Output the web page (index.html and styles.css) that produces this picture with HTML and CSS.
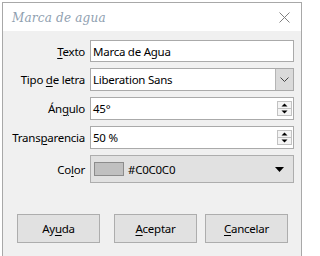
FILE: index.html
```html
<!DOCTYPE html>
<html>
<head>
<meta charset="utf-8">
<link rel="stylesheet" href="styles.css">
</head>
<body>
<div class="window">
  <div class="titlebar">
    <span class="title">Marca de agua</span>
    <svg class="close" width="11" height="11" viewBox="0 0 11 11"><path d="M0.5 0.5L10.5 10.5M10.5 0.5L0.5 10.5" stroke="#808080" stroke-width="1" fill="none"/></svg>
  </div>
  <div class="content">
    <div class="form">
      <span class="lbl"><u>T</u>exto</span>
      <div class="field"><span class="val">Marca de Agua</span></div>

      <span class="lbl">Tipo <u>d</u>e letra</span>
      <div class="field"><span class="val">Liberation Sans</span><span class="ddbtn"><svg width="9" height="5" viewBox="0 0 9 5"><path d="M0.5 0.5L4.5 4.5L8.5 0.5" stroke="#444" stroke-width="1" fill="none"/></svg></span></div>

      <span class="lbl">Án<u>g</u>ulo</span>
      <div class="field"><span class="val">45°</span><span class="spin"><span class="sb"><svg width="7" height="4" viewBox="0 0 7 4"><path d="M3.5 0.5L6.5 3.5H0.5Z" fill="#000"/></svg></span><span class="sb"><svg width="7" height="4" viewBox="0 0 7 4"><path d="M0.5 0.5H6.5L3.5 3.5Z" fill="#000"/></svg></span></span></div>

      <span class="lbl">Trans<u>p</u>arencia</span>
      <div class="field"><span class="val">50 %</span><span class="spin"><span class="sb"><svg width="7" height="4" viewBox="0 0 7 4"><path d="M3.5 0.5L6.5 3.5H0.5Z" fill="#000"/></svg></span><span class="sb"><svg width="7" height="4" viewBox="0 0 7 4"><path d="M0.5 0.5H6.5L3.5 3.5Z" fill="#000"/></svg></span></span></div>

      <span class="lbl">Co<u>l</u>or</span>
      <div class="colorbtn"><span class="swatch"></span><span class="hex">#C0C0C0</span><svg class="tri" width="9" height="5" viewBox="0 0 9 5"><path d="M0 0H9L4.5 5Z" fill="#000"/></svg></div>
    </div>
    <div class="buttons">
      <span class="btn help">Ay<u>u</u>da</span>
      <span class="btn"><u>A</u>ceptar</span>
      <span class="btn"><u>C</u>ancelar</span>
    </div>
  </div>
</div>
</body>
</html>
```
FILE: styles.css
```css
* { box-sizing: border-box; margin: 0; padding: 0; }
html, body { background: #fff; }
body {
  font-family: "Noto Sans", "Open Sans", sans-serif;
  font-size: 11.5px;
  letter-spacing: -0.25px;
  color: #000;
  overflow: hidden;
}
u { text-decoration: underline; text-decoration-thickness: 1px; text-underline-offset: 2px; }
.window {
  margin: 2px 0 0 2px;
  width: 300px;
  height: 260px;
  border: 1px solid #a8a8a8;
  border-bottom: none;
  background: #f0f0f0;
}
.titlebar {
  height: 28px;
  background: #fff;
  display: flex;
  align-items: center;
  justify-content: space-between;
  padding: 0 8px 0 9px;
}
.title {
  font-family: "DejaVu Serif", serif;
  font-style: italic;
  font-size: 12px;
  letter-spacing: 0.2px;
  color: #8fa0b0;
  margin-top: 1px;
}
.close { margin-right: 3px; }
.form {
  display: grid;
  grid-template-columns: 82px 204px;
  grid-template-rows: 22px 23px 23px 23px 28px;
  column-gap: 5px;
  row-gap: 6px;
  padding-top: 9px;
}
.lbl {
  align-self: center;
  text-align: right;
  white-space: nowrap;
}
.field {
  background: #fff;
  border: 1px solid #aaaaaa;
  display: flex;
  align-items: stretch;
}
.val {
  flex: 1;
  display: flex;
  align-items: center;
  padding-left: 2px;
  white-space: nowrap;
}
.ddbtn {
  width: 18px;
  background: #dadada;
  border-left: 1px solid #b5b5b5;
  display: flex;
  align-items: center;
  justify-content: center;
}
.spin {
  display: flex;
  flex-direction: column;
  justify-content: center;
  padding-right: 1px;
}
.sb {
  width: 15px;
  height: 8px;
  background: #f4f4f4;
  border: 1px solid #c2c2c2;
  display: flex;
  align-items: center;
  justify-content: center;
}
.sb + .sb { margin-top: -1px; }
.colorbtn {
  background: #e1e1e1;
  border: 1px solid #adadad;
  display: flex;
  align-items: center;
  padding-left: 3px;
}
.swatch {
  width: 30px;
  height: 14px;
  background: #c0c0c0;
  border: 1px solid #8c8c8c;
}
.hex { margin-left: 4px; flex: 1; }
.tri { margin-right: 9px; }
.buttons {
  display: flex;
  gap: 8px;
  padding: 0 13px 0 14px;
  margin-top: 31px;
}
.btn {
  width: 83px;
  height: 29px;
  background: #e1e1e1;
  border: 1px solid #adadad;
  display: flex;
  align-items: center;
  justify-content: center;
}
.help { margin-right: auto; }
```
